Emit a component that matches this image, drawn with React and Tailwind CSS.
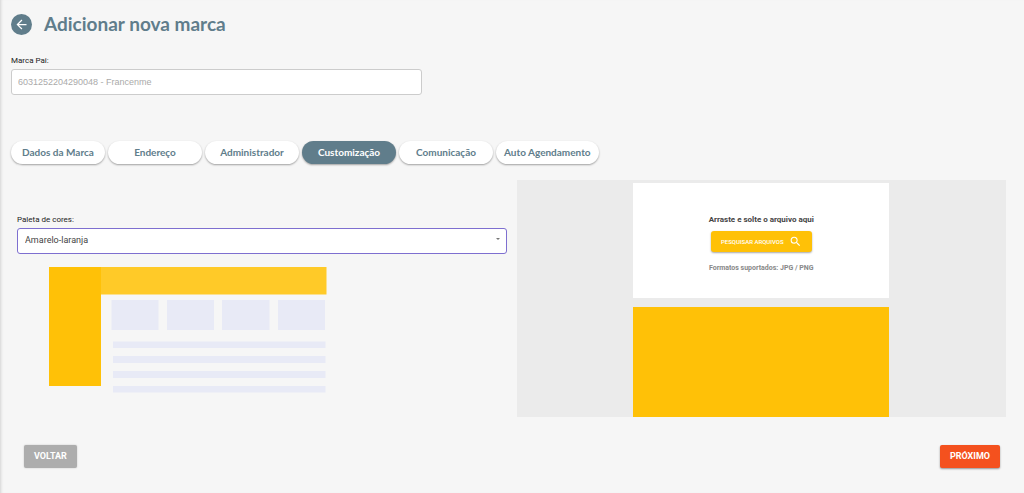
import { useState } from "react";

const tabs = [
  "Dados da Marca",
  "Endereço",
  "Administrador",
  "Customização",
  "Comunicação",
  "Auto Agendamento",
];

function Header() {
  return (
    <header className="flex items-center gap-3 px-[11px] pt-2">
      <button
        type="button"
        aria-label="Voltar"
        className="flex size-[21px] items-center justify-center rounded-full bg-[#607d8b] text-white"
      >
        <svg viewBox="0 0 24 24" className="size-[15px]" fill="currentColor" aria-hidden="true">
          <path d="M20 11H7.83l5.59-5.59L12 4l-8 8 8 8 1.41-1.41L7.83 13H20v-2z" />
        </svg>
      </button>
      <h1 className="font-['Lato',sans-serif] text-[19px] leading-8 font-bold text-[#607d8b]">
        Adicionar nova marca
      </h1>
    </header>
  );
}

function Tabs({ active, onSelect }) {
  return (
    <nav className="mt-[46px] flex flex-wrap gap-[3px] px-[11px]">
      {tabs.map((tab) => (
        <button
          key={tab}
          type="button"
          onClick={() => onSelect(tab)}
          className={
            "h-[23px] min-w-[94px] rounded-full px-2 font-['Lato',sans-serif] text-[10px] font-bold shadow-[0_1px_2px_rgba(0,0,0,0.35)] " +
            (tab === active ? "bg-[#607d8b] text-white" : "bg-white text-[#607d8b]")
          }
        >
          {tab}
        </button>
      ))}
    </nav>
  );
}

function PalettePreview() {
  return (
    <svg
      viewBox="0 0 278 126"
      className="mt-[13px] ml-8 h-[126px] w-[278px]"
      role="img"
      aria-label="Paleta Amarelo-laranja"
    >
      <rect width="52" height="119" fill="#ffc107" />
      <rect x="52" width="225.500" height="27.500" fill="#ffca28" />
      <g fill="#e8eaf6">
        <rect x="62.500" y="33" width="47" height="30" />
        <rect x="118" y="33" width="47" height="30" />
        <rect x="173" y="33" width="47.500" height="30" />
        <rect x="229" y="33" width="47" height="30" />
        <rect x="64" y="74.500" width="212.500" height="6.500" />
        <rect x="64" y="89" width="212.500" height="7" />
        <rect x="64" y="104" width="212.500" height="7" />
        <rect x="64" y="119" width="212.500" height="6.500" />
      </g>
    </svg>
  );
}

function PaletteField() {
  return (
    <section className="pt-8">
      <label
        htmlFor="paleta"
        className="block font-['Roboto',sans-serif] text-[8px] leading-4 text-[#222]"
      >
        Paleta de cores:
      </label>
      <div className="relative">
        <select
          id="paleta"
          className="block h-[26px] w-full appearance-none rounded-[3px] border border-[#7e6fd0] bg-white px-[7px] font-['Roboto',sans-serif] text-[9px] text-[#444] outline-none"
        >
          <option>Amarelo-laranja</option>
        </select>
        <svg
          viewBox="0 0 4 2"
          className="pointer-events-none absolute top-[10px] right-[7px] h-[2px] w-1"
          fill="#777"
          aria-hidden="true"
        >
          <path d="M0 0h4L2 2z" />
        </svg>
      </div>
      <PalettePreview />
    </section>
  );
}

function UploadPanel() {
  return (
    <section className="flex flex-col items-center gap-[9px] bg-[#ebebeb] pt-[3px]">
      <div className="flex h-[115px] w-64 flex-col items-center bg-white pt-[30px] font-['Roboto',sans-serif]">
        <p className="text-[8px] leading-[14px] font-bold text-[#444]">
          Arraste e solte o arquivo aqui
        </p>
        <button
          type="button"
          className="mt-1 flex h-[21px] items-center gap-[5px] rounded-[3px] bg-[#ffc107] px-[10px] text-[6px] font-medium text-white shadow-[0_1px_2px_rgba(0,0,0,0.35)]"
        >
          PESQUISAR ARQUIVOS
          <svg viewBox="0 0 24 24" className="size-[13px]" fill="currentColor" aria-hidden="true">
            <path d="M15.500 14h-.79l-.28-.27A6.471 6.471 0 0 0 16 9.500 6.500 6.500 0 1 0 9.500 16c1.610 0 3.090-.59 4.230-1.570l.27.28v.79l5 4.990L20.490 19l-4.990-5zm-6 0C7.010 14 5 11.990 5 9.500S7.010 5 9.500 5 14 7.010 14 9.500 11.990 14 9.500 14z" />
          </svg>
        </button>
        <p className="mt-[9px] text-[7px] leading-[14px] font-bold text-[#888]">
          Formatos suportados: JPG / PNG
        </p>
      </div>
      <div className="h-[110px] w-64 bg-[#ffc107]" />
    </section>
  );
}

export default function App() {
  const [active, setActive] = useState("Customização");

  return (
    <main className="min-h-screen bg-[#f6f6f6] pb-6 shadow-[inset_3px_0_3px_-2px_rgba(0,0,0,0.14)]">
      <Header />
      <div className="mt-[13px] px-[11px]">
        <label
          htmlFor="marca-pai"
          className="block font-['Roboto',sans-serif] text-[8px] leading-4 text-[#222]"
        >
          Marca Pai:
        </label>
        <input
          id="marca-pai"
          type="text"
          disabled
          value="6031252204290048 - Francenme"
          className="block h-[26px] w-[41%] rounded-[3px] border border-[#ccc] bg-white px-[6px] font-['Liberation_Sans',sans-serif] text-[9px] text-[#aaa]"
        />
      </div>
      <Tabs active={active} onSelect={setActive} />
      <div className="mt-4 grid grid-cols-2 gap-[10px] pr-[18px] pl-[17px]">
        <PaletteField />
        <UploadPanel />
      </div>
      <footer className="mt-7 flex justify-between px-6 font-['Roboto',sans-serif] text-[9px] font-bold text-white">
        <button
          type="button"
          className="h-[23px] rounded-[2px] bg-[#adadad] px-[10px] shadow-[0_0_2px_rgba(0,0,0,0.2)]"
        >
          VOLTAR
        </button>
        <button
          type="button"
          className="h-[23px] rounded-[2px] bg-[#f4511e] px-[10px] shadow-[0_1px_2px_rgba(0,0,0,0.4)]"
        >
          PRÓXIMO
        </button>
      </footer>
    </main>
  );
}
